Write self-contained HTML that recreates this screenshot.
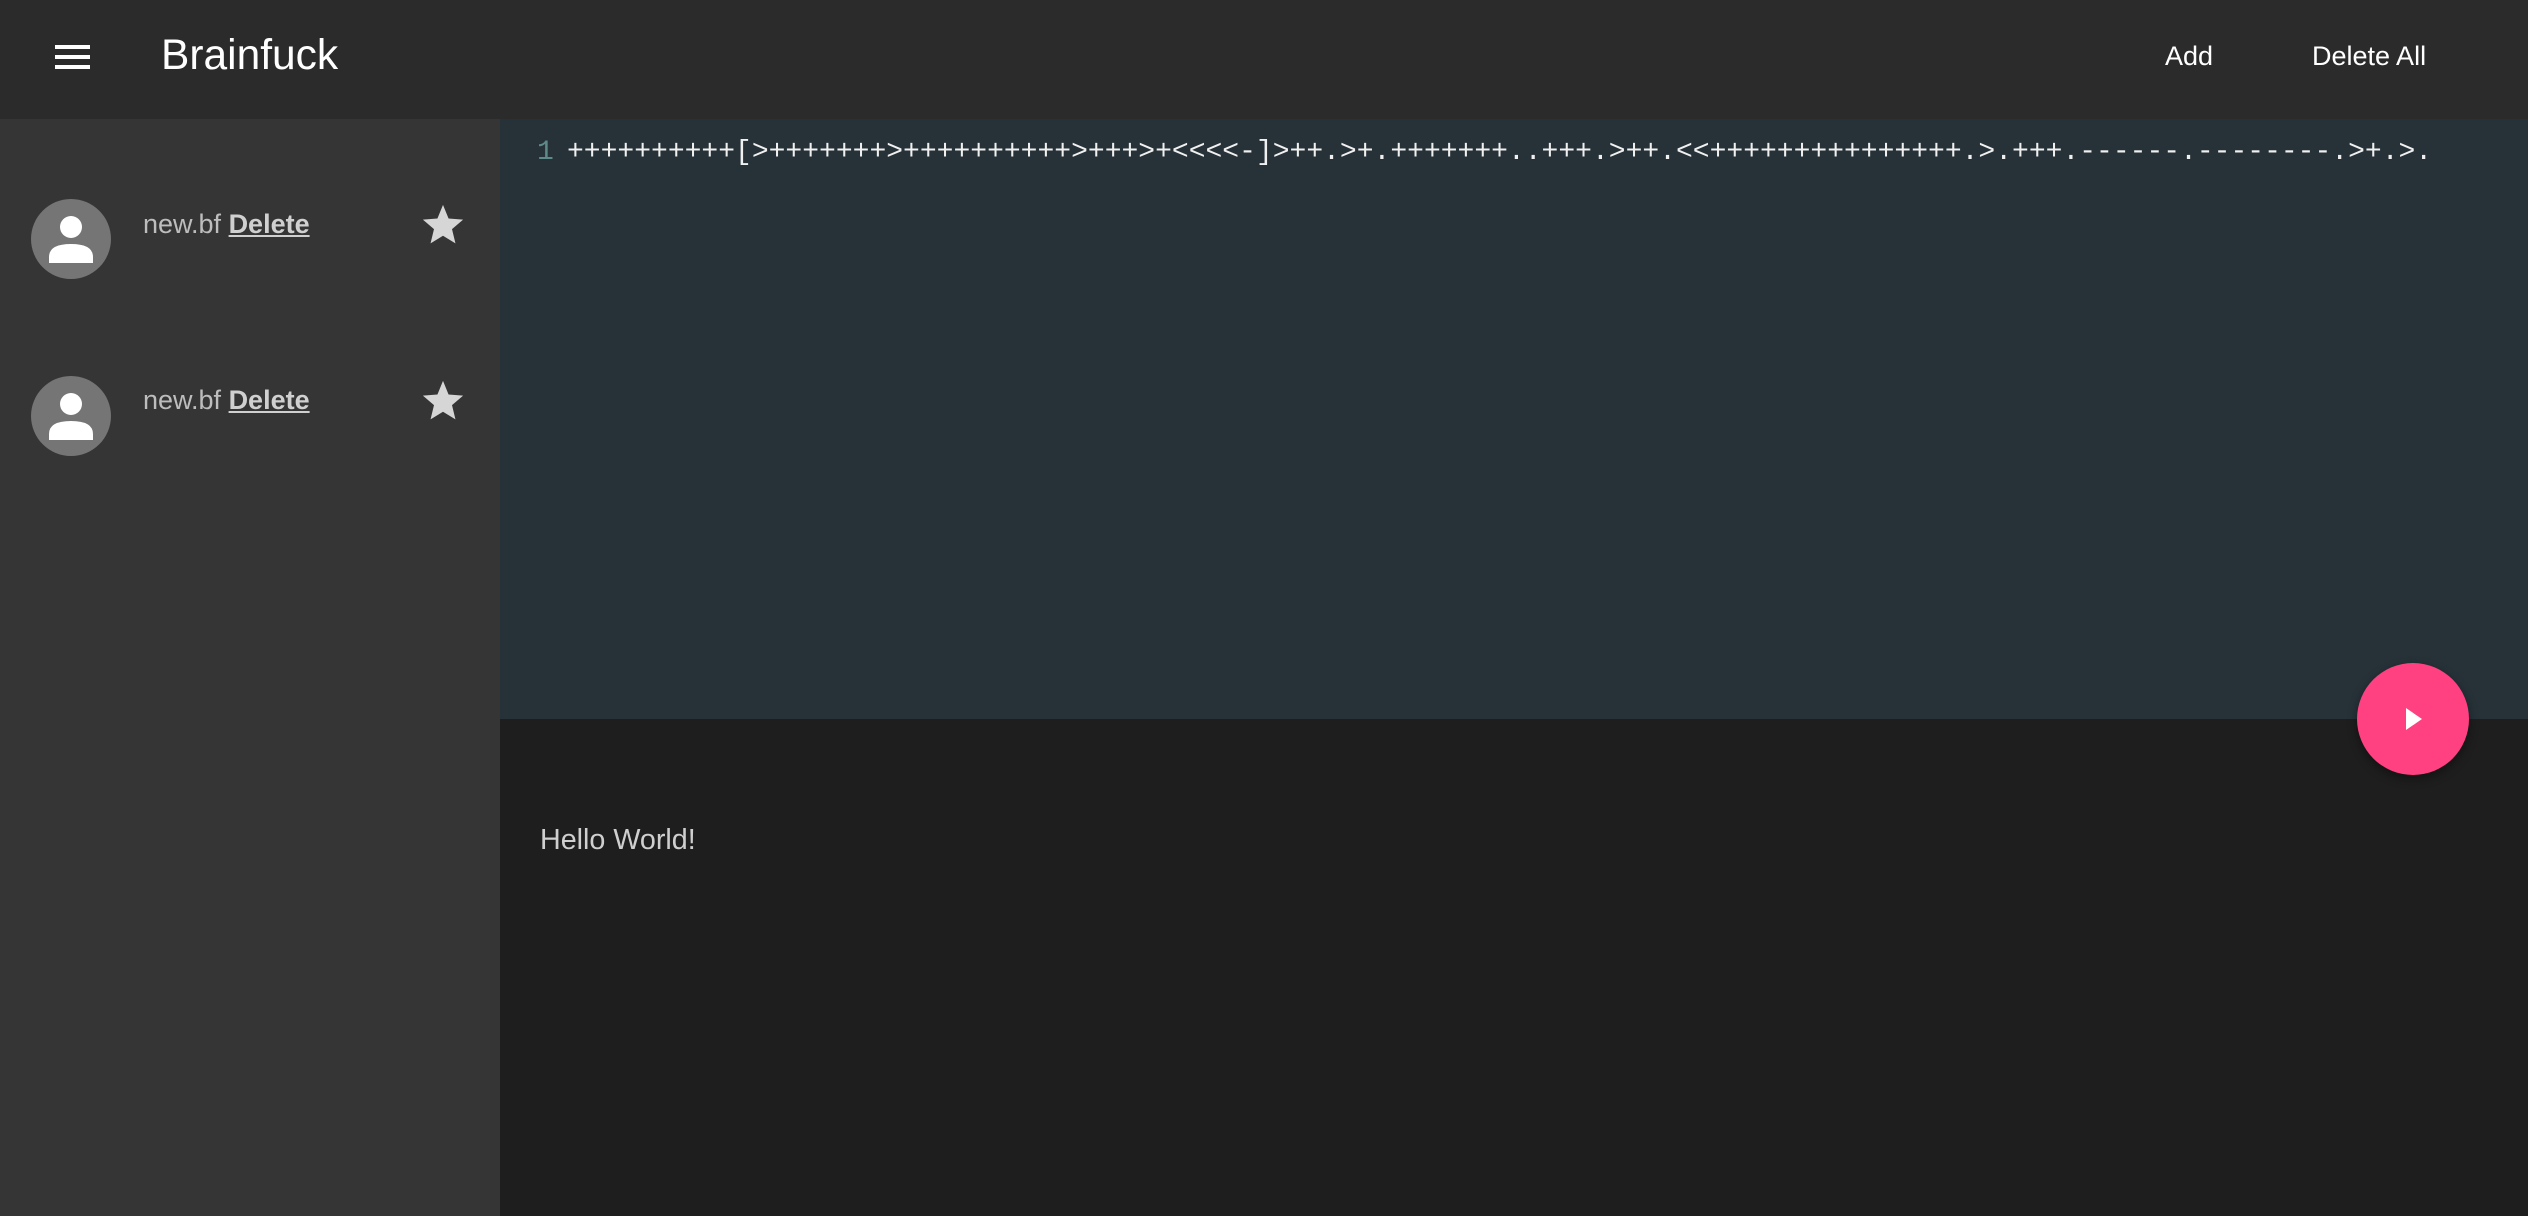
<!DOCTYPE html>
<html><head><meta charset="utf-8"><style>
*{margin:0;padding:0;box-sizing:border-box}
body{width:2528px;height:1216px;overflow:hidden;background:#1e1e1e;font-family:"Liberation Sans",sans-serif;position:relative}
.hdr{position:absolute;left:0;top:0;width:2528px;height:119px;background:#2b2b2b}
.hb{position:absolute;left:55px;width:35px;height:4px;background:#fff}
.title{position:absolute;left:161px;top:31px;font-size:42.5px;color:#fff;line-height:50px}
.btn{position:absolute;top:38px;font-size:27px;color:#fff;line-height:36px}
.side{position:absolute;left:0;top:119px;width:500px;height:1097px;background:#353535}
.av{position:absolute;left:31px;width:80px;height:80px;border-radius:50%;background:#757575;overflow:hidden}
.txt{position:absolute;left:143px;font-size:27px;color:#bdbdbd;line-height:36px}
.txt u{font-weight:bold;color:#d0d0d0}
.star{position:absolute;left:420px}
.ed{position:absolute;left:500px;top:119px;width:2028px;height:600px;background:#263238}
.ln{position:absolute;left:537px;top:136px;font-family:"Liberation Mono",monospace;font-size:28px;color:#5f8a8a;line-height:34px}
.code{position:absolute;left:567px;top:136px;font-family:"Liberation Mono",monospace;font-size:28px;color:#f0f0f0;line-height:34px;white-space:pre}
.out{position:absolute;left:540px;top:822px;font-size:28.7px;color:#cfcfcf;line-height:36px}
.fab{position:absolute;left:2357px;top:663px;width:112px;height:112px;border-radius:50%;background:#ff4081;box-shadow:0 4px 10px rgba(0,0,0,.4)}
</style></head><body>
<div class="hdr">
<div class="hb" style="top:45px"></div><div class="hb" style="top:55px"></div><div class="hb" style="top:65px"></div>
<div class="title">Brainfuck</div>
<div class="btn" style="left:2165px">Add</div>
<div class="btn" style="left:2312px">Delete All</div>
</div>
<div class="side">
<div class="av" style="top:80px"><svg width="80" height="80" viewBox="0 0 80 80"><circle cx="40" cy="28" r="11" fill="#fff"/><path d="M18 64 L18 58 Q18 45 40 45 Q62 45 62 58 L62 64 Z" fill="#fff"/></svg></div>
<div class="txt" style="top:87px">new.bf <u>Delete</u></div>
<svg class="star" style="top:82px" width="46" height="46" viewBox="0 0 24 24"><path d="M12 2l2.9 7.1 7.6.6-5.8 5 1.8 7.4L12 18.1 5.5 22.1l1.8-7.4-5.8-5 7.6-.6z" fill="#d6d6d6"/></svg>
<div class="av" style="top:257px"><svg width="80" height="80" viewBox="0 0 80 80"><circle cx="40" cy="28" r="11" fill="#fff"/><path d="M18 64 L18 58 Q18 45 40 45 Q62 45 62 58 L62 64 Z" fill="#fff"/></svg></div>
<div class="txt" style="top:263px">new.bf <u>Delete</u></div>
<svg class="star" style="top:258px" width="46" height="46" viewBox="0 0 24 24"><path d="M12 2l2.9 7.1 7.6.6-5.8 5 1.8 7.4L12 18.1 5.5 22.1l1.8-7.4-5.8-5 7.6-.6z" fill="#d6d6d6"/></svg>
</div>
<div class="ed"></div>
<div class="ln">1</div>
<div class="code">++++++++++[&gt;+++++++&gt;++++++++++&gt;+++&gt;+&lt;&lt;&lt;&lt;-]&gt;++.&gt;+.+++++++..+++.&gt;++.&lt;&lt;+++++++++++++++.&gt;.+++.------.--------.&gt;+.&gt;.</div>
<div class="out">Hello World!</div>
<div class="fab"><svg width="112" height="112" viewBox="0 0 112 112"><path d="M49 45 L65 56 L49 67 Z" fill="#fff"/></svg></div>
</body></html>
